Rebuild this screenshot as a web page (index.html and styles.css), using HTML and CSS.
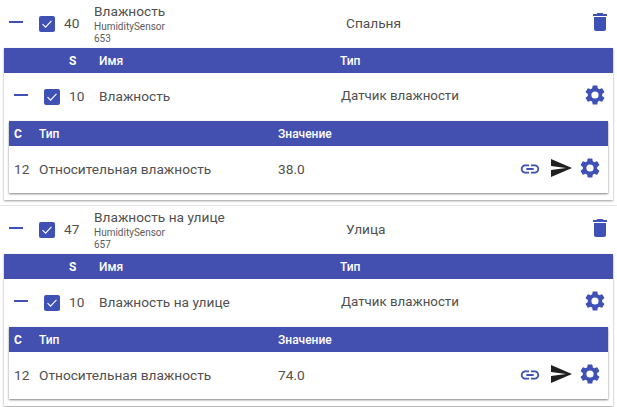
FILE: index.html
```html
<!DOCTYPE html>
<html lang="ru">
<head>
<meta charset="utf-8">
<title>Датчики</title>
<link rel="stylesheet" href="styles.css">
</head>
<body>
<svg class="defs" width="0" height="0" aria-hidden="true">
  <symbol id="i-gear" viewBox="0 0 24 24"><path d="M19.14 12.94c.04-.3.06-.61.06-.94 0-.32-.02-.64-.07-.94l2.03-1.58a.49.49 0 0 0 .12-.61l-1.92-3.32a.49.49 0 0 0-.59-.22l-2.39.96c-.5-.38-1.03-.7-1.62-.94l-.36-2.54a.48.48 0 0 0-.48-.41h-3.84a.48.48 0 0 0-.47.41l-.36 2.54c-.59.24-1.13.57-1.62.94l-2.39-.96a.48.48 0 0 0-.59.22L2.74 8.87a.47.47 0 0 0 .12.61l2.03 1.58c-.05.3-.09.63-.09.94s.02.64.07.94l-2.03 1.58a.49.49 0 0 0-.12.61l1.92 3.32c.12.22.37.29.59.22l2.39-.96c.5.38 1.03.7 1.62.94l.36 2.54c.05.24.24.41.48.41h3.84c.24 0 .44-.17.47-.41l.36-2.54c.59-.24 1.13-.56 1.62-.94l2.39.96c.22.08.47 0 .59-.22l1.92-3.32a.47.47 0 0 0-.12-.61l-2.01-1.58zM12 15.6A3.6 3.6 0 1 1 12 8.4a3.6 3.6 0 0 1 0 7.2z"/></symbol>
  <symbol id="i-trash" viewBox="0 0 24 24"><path d="M6 19c0 1.1.9 2 2 2h8c1.1 0 2-.9 2-2V7H6v12zM19 4h-3.5l-1-1h-5l-1 1H5v2h14V4z"/></symbol>
  <symbol id="i-link" viewBox="0 0 24 24"><path d="M3.9 12c0-1.71 1.39-3.1 3.1-3.1h4V7H7c-2.76 0-5 2.24-5 5s2.24 5 5 5h4v-1.9H7c-1.71 0-3.1-1.39-3.1-3.1zM8 13h8v-2H8v2zm9-6h-4v1.9h4c1.71 0 3.1 1.39 3.1 3.1s-1.39 3.1-3.1 3.1h-4V17h4c2.76 0 5-2.24 5-5s-2.24-5-5-5z"/></symbol>
  <symbol id="i-send" viewBox="0 0 24 24"><path d="M2.01 21 23 12 2.01 3 2 10l15 2-15 2z"/></symbol>
  <symbol id="i-check" viewBox="0 0 18 18"><path d="M4 9.2 7.4 12.6 14 5.6" fill="none" stroke="#fff" stroke-width="1.3"/></symbol>
</svg>

<section class="device">
  <header class="device-head">
    <span class="dash"></span>
    <span class="box"><svg class="check"><use href="#i-check"/></svg></span>
    <span class="num">40</span>
    <div class="device-name">
      <div class="title">Влажность</div>
      <div class="small">HumiditySensor</div>
      <div class="small">653</div>
    </div>
    <span class="room">Спальня</span>
    <svg class="icon trash"><use href="#i-trash"/></svg>
  </header>
  <div class="panel">
    <div class="bar"><span class="col-s">S</span><span class="col-name">Имя</span><span class="col-type">Тип</span></div>
    <div class="channel">
      <span class="dash"></span>
      <span class="box"><svg class="check"><use href="#i-check"/></svg></span>
      <span class="num">10</span>
      <span class="ch-name">Влажность</span>
      <span class="ch-type">Датчик влажности</span>
      <svg class="icon gear"><use href="#i-gear"/></svg>
    </div>
    <div class="subcard">
      <div class="bar"><span class="col-c">С</span><span class="col-t">Тип</span><span class="col-v">Значение</span></div>
      <div class="value-row">
        <span class="v-num">12</span>
        <span class="v-type">Относительная влажность</span>
        <span class="v-val">38.0</span>
        <svg class="icon link"><use href="#i-link"/></svg>
        <svg class="icon send"><use href="#i-send"/></svg>
        <svg class="icon gear-sm"><use href="#i-gear"/></svg>
      </div>
    </div>
  </div>
</section>

<section class="device">
  <header class="device-head">
    <span class="dash"></span>
    <span class="box"><svg class="check"><use href="#i-check"/></svg></span>
    <span class="num">47</span>
    <div class="device-name">
      <div class="title">Влажность на улице</div>
      <div class="small">HumiditySensor</div>
      <div class="small">657</div>
    </div>
    <span class="room">Улица</span>
    <svg class="icon trash"><use href="#i-trash"/></svg>
  </header>
  <div class="panel">
    <div class="bar"><span class="col-s">S</span><span class="col-name">Имя</span><span class="col-type">Тип</span></div>
    <div class="channel">
      <span class="dash"></span>
      <span class="box"><svg class="check"><use href="#i-check"/></svg></span>
      <span class="num">10</span>
      <span class="ch-name">Влажность на улице</span>
      <span class="ch-type">Датчик влажности</span>
      <svg class="icon gear"><use href="#i-gear"/></svg>
    </div>
    <div class="subcard">
      <div class="bar"><span class="col-c">С</span><span class="col-t">Тип</span><span class="col-v">Значение</span></div>
      <div class="value-row">
        <span class="v-num">12</span>
        <span class="v-type">Относительная влажность</span>
        <span class="v-val">74.0</span>
        <svg class="icon link"><use href="#i-link"/></svg>
        <svg class="icon send"><use href="#i-send"/></svg>
        <svg class="icon gear-sm"><use href="#i-gear"/></svg>
      </div>
    </div>
  </div>
</section>
</body>
</html>
```
FILE: styles.css
```css
* { box-sizing: border-box; }
html, body { margin: 0; padding: 0; background: #fff; overflow: hidden; }
body {
  width: 617px;
  height: 407px;
  font-family: Roboto, "Liberation Sans", sans-serif;
  font-size: 13.7px;
  color: #505050;
}
.defs { position: absolute; }
.device {
  height: 206px;
  padding: 0 4px;
  border-bottom: 1px solid #e6e6e6;
}
.device-head {
  height: 48px;
  display: flex;
  align-items: center;
}
.dash { width: 14px; height: 2px; background: #3f51b5; flex: none; margin: 0 0 4px 5px; }
.box {
  width: 16px;
  height: 16px;
  border-radius: 2px;
  background: #3f51b5;
  flex: none;
  display: block;
  margin-left: 16px;
}
.check { display: block; width: 16px; height: 16px; }
.num { flex: none; margin: 0 0 2px 9px; width: 30px; }
.device-name { width: 252px; margin-bottom: 3px; }
.title { line-height: 20px; height: 20px; }
.small { font-size: 10px; line-height: 12px; color: #5c5c5c; }
.room { flex: 1; margin-bottom: 2px; }
.icon { display: block; flex: none; fill: #3f51b5; }
.trash { width: 24px; height: 24px; margin: 0 1px 4px 0; }
.bar {
  height: 25px;
  background: #4350b0;
  color: #fff;
  font-weight: 500;
  font-size: 12px;
  display: flex;
  align-items: center;
}
.col-s { margin-left: 65px; width: 30px; font-weight: 700; }
.col-name { width: 241px; }
.panel {
  height: 152px;
  box-shadow: 0 1px 2px rgba(0, 0, 0, .4);
  background: #fff;
}
.channel {
  height: 48px;
  display: flex;
  align-items: center;
  padding: 0 5px 1px;
}
.ch-name { width: 242px; margin-bottom: 2px; }
.ch-type { flex: 1; font-size: 13.3px; margin-bottom: 2px; }
.gear { width: 24px; height: 24px; margin: 0 1px 3px 0; }
.subcard {
  margin: 0 5px;
  box-shadow: 0 1px 2px rgba(0, 0, 0, .5);
}
.col-c { margin-left: 5px; width: 25px; font-weight: 700; }
.col-t { width: 239px; }
.value-row {
  height: 47px;
  display: flex;
  align-items: center;
  padding-bottom: 2px;
}
.v-num { margin-left: 5px; width: 25px; }
.v-type { width: 239px; }
.v-val { flex: 1; }
.link { width: 22px; height: 22px; margin-right: 8px; }
.send { width: 24px; height: 24px; fill: #1f1f1f; margin: 0 5px 2px 0; }
.gear-sm { width: 24px; height: 24px; margin: 0 6px 1px 0; }
```
